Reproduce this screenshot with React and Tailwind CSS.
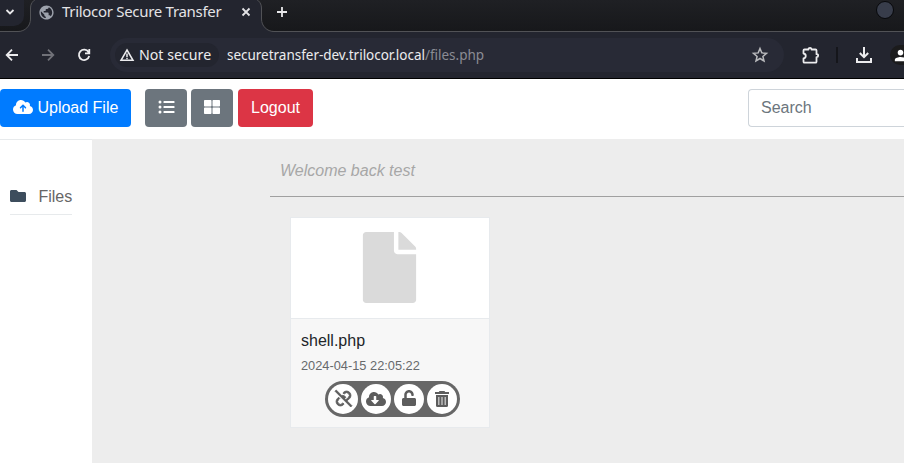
import { FaFile, FaThLarge, FaListUl, FaFolder, FaUnlock, FaCloudDownloadAlt } from "react-icons/fa";
import { FaCloudArrowUp } from "react-icons/fa6";
import { BiUnlink } from "react-icons/bi";
import { MdPerson, MdPublic } from "react-icons/md";

function Glyph({ d, size, width = 1.8, className = "" }) {
  return (
    <svg className={`shrink-0 ${className}`} width={size} height={size} viewBox={`0 0 ${size} ${size}`} fill="none" stroke="currentColor" strokeWidth={width}>
      <path d={d} />
    </svg>
  );
}

function TabStrip() {
  return (
    <div className="relative flex h-8 shrink-0 border-b border-[#515256] bg-linear-to-b from-[#1f2024] to-[#17181b]">
      <div className="flex h-[26px] w-6 shrink-0 items-start rounded-br-[10px] bg-[#23252f] pl-[5px] pt-[7px] text-[#e8e8ea]">
        <Glyph size={10} d="M1.500 3L5 6.500L8.500 3" />
      </div>
      <svg className="absolute left-0 top-0" width="290" height="33" viewBox="0 0 290 33">
        <path d="M18 33V31.5C25 31.5 30.5 26 30.5 19V8C30.5 4 32.5 1 36-1H256C259.500 1 261.500 4 261.500 8V19C261.500 26 267 31.500 274 31.500V33Z" fill="#23252f" />
        <path d="M18 31.5C25 31.5 30.5 26 30.5 19V8C30.5 4 32.5 1 36-1M256-1C259.500 1 261.500 4 261.500 8V19C261.500 26 267 31.500 274 31.500" fill="none" stroke="#515256" />
      </svg>
      <div className="relative flex h-6 w-[237px] items-center pl-[14px] text-[#e3e3e6]">
        <MdPublic className="size-[17px] shrink-0 text-[#9da2ac]" />
        <span className="-mt-[2px] ml-[7px] w-[179px] shrink-0 whitespace-nowrap text-[15px] tracking-[-0.300px]">Trilocor Secure Transfer</span>
        <Glyph size={10} d="M1.500 1.500L8.500 8.500M8.500 1.500L1.500 8.500" />
      </div>
      <div className="relative flex h-6 items-center pl-[15px] text-[#e8e8ea]"><Glyph size={12} d="M6 1V11M1 6H11" /></div>
      <div className="ml-auto mr-[10px] mt-[1px] size-[18px] rounded-full border border-[#07080b] bg-[#383d4b]" />
    </div>
  );
}

function Toolbar() {
  return (
    <div className="flex h-[47px] shrink-0 items-center border-b border-black bg-[#23252f] text-[#ececee]">
      <Glyph size={14} className="ml-[5px]" d="M13 7H2M7 1.700L1.700 7L7 12.300" />
      <Glyph size={14} className="ml-[22px] text-[#707178]" d="M1 7H12M7 1.700L12.300 7L7 12.300" />
      <Glyph size={14} className="ml-[22px]" d="M11.500 4A5.200 5.200 0 1 0 12.200 8M12.300 1V5.300H8" />
      <div className="ml-[19px] flex h-[34px] w-[674px] shrink-0 items-center rounded-full bg-[#282a36] pl-[5px] text-[14px]">
        <div className="flex h-6 w-[104px] shrink-0 items-center rounded-full bg-[#23252f] pl-1">
          <svg className="shrink-0" width="16" height="14" viewBox="0 0 16 14" fill="none" stroke="currentColor" strokeWidth="1.5">
            <path d="M8 2L14 12.250H2Z" />
            <path d="M8 5.500V9M8 9.800V11.200" />
          </svg>
          <span className="-mt-px ml-[4px] whitespace-nowrap text-[14.200px]">Not secure</span>
        </div>
        <span className="ml-[8px] whitespace-nowrap text-[13.500px] tracking-[-0.020px]">securetransfer-dev.trilocor.local<span className="text-[#8b8c94]">/files.php</span></span>
        <Glyph size={18} width={1.500} className="ml-auto mr-[15px] text-[#b9babd]" d="M9 2.500L10.800 6.900L15.500 7.300L11.900 10.400L13 15L9 12.500L5 15L6.100 10.400L2.500 7.300L7.200 6.900Z" />
      </div>
      <svg className="ml-[17px] shrink-0" width="19" height="19" viewBox="0 0 19 19">
        <path d="M3.500 3.500H7.500C7.500 1.200 10.500 1.200 10.500 3.500H14.500Q15.500 3.500 15.500 4.500V8.200C17.700 8.200 17.700 11.200 15.500 11.200V15.700Q15.500 16.700 14.500 16.700H3.500Q2.500 16.700 2.500 15.700V12.500C5.500 12 5.500 8 2.500 7.500V4.500Q2.500 3.500 3.500 3.500Z" fill="none" stroke="currentColor" strokeWidth="1.800" strokeLinejoin="round" />
      </svg>
      <div className="ml-[16px] h-4 w-[2px] shrink-0 bg-[#15161b]" />
      <Glyph size={18} width={2} className="ml-[17px]" d="M9 1V11M4.800 7L9 11.200L13.200 7M2 12V16H16V12" />
      <div className="ml-[17px] flex h-5 w-[14px] shrink-0 items-center overflow-hidden rounded-l-full bg-[#1b1b1c] pl-[2px] text-white">
        <MdPerson className="size-[17px] shrink-0" />
      </div>
    </div>
  );
}

function TrashIcon() {
  return (
    <svg className="-mt-px" width="14" height="16" viewBox="0 0 14 16" fill="currentColor">
      <path d="M4.500 0H9.500L10.200 1H14V3H0V1H3.800Z" />
      <path d="M1 4H13V14.500Q13 16 11.500 16H2.500Q1 16 1 14.500Z" />
      <path d="M3 6H4.500V14H3ZM6.250 6H7.750V14H6.250ZM9.500 6H11V14H9.500Z" fill="#bdbdbd" />
    </svg>
  );
}

const actions = [
  <BiUnlink className="-mt-[2px] size-[21px]" stroke="currentColor" strokeWidth="0.9" />,
  <FaCloudDownloadAlt className="-mt-px size-5" />,
  <FaUnlock className="-mt-[2px] size-4" />,
  <TrashIcon />,
];

function FileCard() {
  return (
    <div className="ml-5 mt-5 w-[200px] border border-[#e7eaed] bg-[#f7f7f7]">
      <div className="flex h-[101px] items-center justify-center border-b border-[#e7eaed] bg-white pb-px pr-px">
        <FaFile className="size-[71px] text-[#dadada]" />
      </div>
      <div className="h-[108px] px-[10px] pt-[10px]">
        <div className="text-base leading-6 text-[#212529]">shell.php</div>
        <div className="mt-[3px] text-[12.800px] leading-5 text-[#676a6c]">2024-04-15 22:05:22</div>
        <div className="ml-6 mt-[5px] flex h-9 w-[135px] items-center gap-[3px] rounded-full bg-[#676767] pl-[3px]">
          {actions.map((icon, i) => (
            <div key={i} className="flex size-[30px] items-center justify-center rounded-full bg-white text-[#5d5d5d]">
              {icon}
            </div>
          ))}
        </div>
      </div>
    </div>
  );
}

export default function App() {
  return (
    <div className="flex h-[463px] w-[904px] flex-col overflow-hidden bg-white font-['Noto_Sans',sans-serif]">
      <TabStrip />
      <Toolbar />
      <div className="flex min-h-0 flex-1 flex-col font-['Liberation_Sans',Arial,sans-serif] text-base">
        <div className="flex h-[60px] shrink-0 pt-[10px] text-white">
          <button className="flex h-[38px] w-[131px] items-center rounded bg-[#007bff] pl-[13px]">
            <FaCloudArrowUp className="-mt-[2px] h-4 w-5 shrink-0" />
            <span className="ml-[4.450px] whitespace-nowrap">Upload File</span>
          </button>
          <button className="ml-[14px] flex h-[38px] w-[42px] items-center justify-center rounded bg-[#6c757d] pb-[2px]"><FaListUl className="h-4 w-[17px]" /></button>
          <button className="ml-1 flex h-[38px] w-[42px] items-center justify-center rounded bg-[#6c757d] pb-[2px]"><FaThLarge /></button>
          <button className="ml-[5px] h-[38px] w-[75px] rounded bg-[#dc3545]">Logout</button>
          <div className="ml-auto flex h-[38px] w-[156px] items-center rounded-l border border-r-0 border-[#ced4da] pl-3 text-[#6c757d]">Search</div>
        </div>
        <div className="flex min-h-0 flex-1">
          <aside className="w-[92px] border-t border-[#e7eaec] pl-[10px] pr-5 pt-[39px]">
            <div className="flex h-9 items-center border-b border-[#e7eaec] text-[#666666]">
              <FaFolder className="-mt-[2px] size-4 shrink-0 text-[#3d4d5d]" />
              <span className="ml-[12.450px]">Files</span>
            </div>
          </aside>
          <main className="flex-1 bg-[#ededed] pl-[178px]">
            <div className="flex h-[58px] items-center border-b border-[#a0a0a0] pl-[10px] pt-[7px] italic text-[#a7a7a7]">Welcome back test</div>
            <FileCard />
          </main>
        </div>
      </div>
    </div>
  );
}
